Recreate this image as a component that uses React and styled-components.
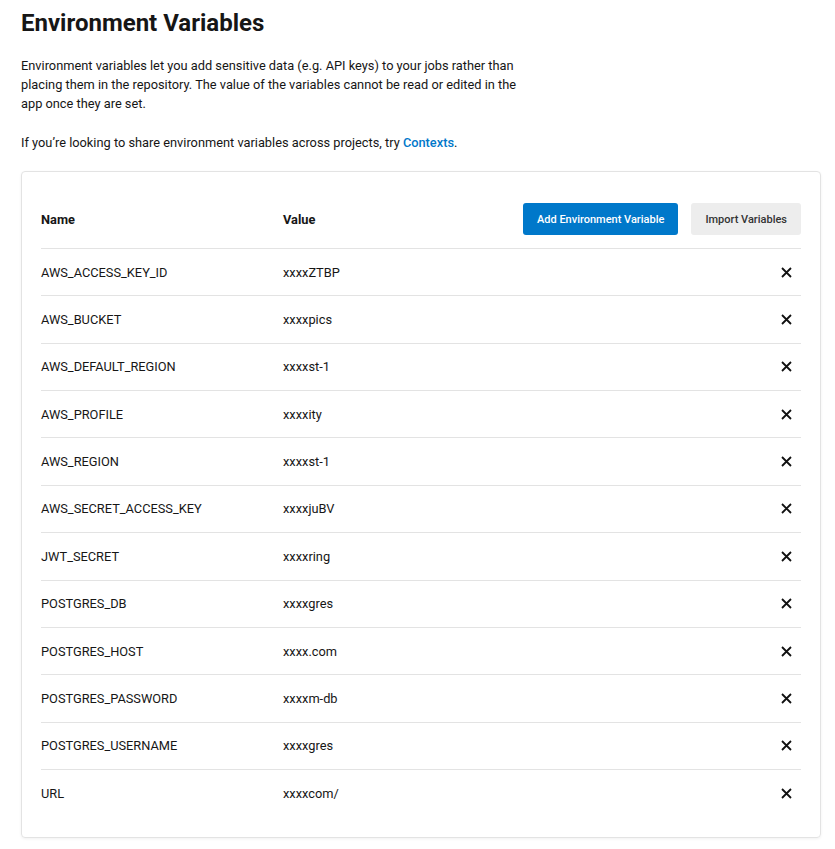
import React from 'react';
import styled, {createGlobalStyle} from 'styled-components';

const GlobalStyle = createGlobalStyle`
  body {
    margin: 0;
    background: #fff;
    font-family: Roboto, "Liberation Sans", sans-serif;
    color: #161616;
  }
`;

const Page = styled.div`
  padding: 10px 14px 12px 21px;
`;

const Title = styled.h1`
  margin: 0;
  font-size: 24px;
  line-height: 26px;
  font-weight: 700;
  color: #161616;
`;

const Text = styled.p`
  margin: 20px 0 0;
  max-width: 500px;
  font-size: 12.8px;
  line-height: 19px;
  color: #161616;
`;

const Link = styled.a`
  color: #0078ca;
  font-weight: 500;
  text-decoration: none;
`;

const Card = styled.div`
  margin-top: 19px;
  width: 800px;
  box-sizing: border-box;
  padding: 20px 19px 20px 19px;
  border: 1px solid #e3e3e3;
  border-radius: 4px;
  box-shadow: 0 1px 3px rgba(0, 0, 0, 0.06);
`;

const Row = styled.div`
  display: grid;
  grid-template-columns: 242px 1fr auto;
  align-items: center;
  box-sizing: border-box;
  height: ${props => props.head ? '57px' : '47.36px'};
  padding-bottom: ${props => props.head ? '2px' : '0'};
  border-bottom: ${props => props.last ? 'none' : '1px solid #e3e3e3'};
  font-size: 12.8px;
  color: #161616;
`;

const HeadCell = styled.div`
  font-weight: 700;
`;

const Cell = styled.div``;

const Actions = styled.div`
  display: flex;
  gap: 13px;
`;

const Button = styled.button`
  height: 32px;
  padding: 0 14px;
  border: none;
  border-radius: 3px;
  font-family: Roboto, "Liberation Sans", sans-serif;
  font-size: 11px;
  font-weight: 500;
  cursor: pointer;
  background: ${props => props.primary ? '#0078ca' : '#ededed'};
  color: ${props => props.primary ? '#fff' : '#333'};
`;

const Remove = styled.button`
  width: 24px;
  height: 24px;
  margin-right: 3px;
  padding: 0;
  border: none;
  background: none;
  display: flex;
  align-items: center;
  justify-content: center;
  cursor: pointer;
`;

const vars = [
    ['AWS_ACCESS_KEY_ID', 'xxxxZTBP'],
    ['AWS_BUCKET', 'xxxxpics'],
    ['AWS_DEFAULT_REGION', 'xxxxst-1'],
    ['AWS_PROFILE', 'xxxxity'],
    ['AWS_REGION', 'xxxxst-1'],
    ['AWS_SECRET_ACCESS_KEY', 'xxxxjuBV'],
    ['JWT_SECRET', 'xxxxring'],
    ['POSTGRES_DB', 'xxxxgres'],
    ['POSTGRES_HOST', 'xxxx.com'],
    ['POSTGRES_PASSWORD', 'xxxxm-db'],
    ['POSTGRES_USERNAME', 'xxxxgres'],
    ['URL', 'xxxxcom/'],
];

const Cross = () => (
    <svg width="11" height="11" viewBox="0 0 11 11">
        <path d="M1 1L10 10M10 1L1 10" stroke="#111" strokeWidth="1.8" fill="none"/>
    </svg>
);

const App = () => {
    return (
        <Page>
            <GlobalStyle/>
            <Title>Environment Variables</Title>
            <Text>
                Environment variables let you add sensitive data (e.g. API keys) to your jobs rather than placing
                them in the repository. The value of the variables cannot be read or edited in the app once they
                are set.
            </Text>
            <Text>
                If you’re looking to share environment variables across projects, try <Link href="#">Contexts</Link>.
            </Text>
            <Card>
                <Row head>
                    <HeadCell>Name</HeadCell>
                    <HeadCell>Value</HeadCell>
                    <Actions>
                        <Button primary>Add Environment Variable</Button>
                        <Button>Import Variables</Button>
                    </Actions>
                </Row>
                {vars.map(([name, value], i) => (
                    <Row key={name} last={i === vars.length - 1}>
                        <Cell>{name}</Cell>
                        <Cell>{value}</Cell>
                        <Remove><Cross/></Remove>
                    </Row>
                ))}
            </Card>
        </Page>
    );
};

export default App;
